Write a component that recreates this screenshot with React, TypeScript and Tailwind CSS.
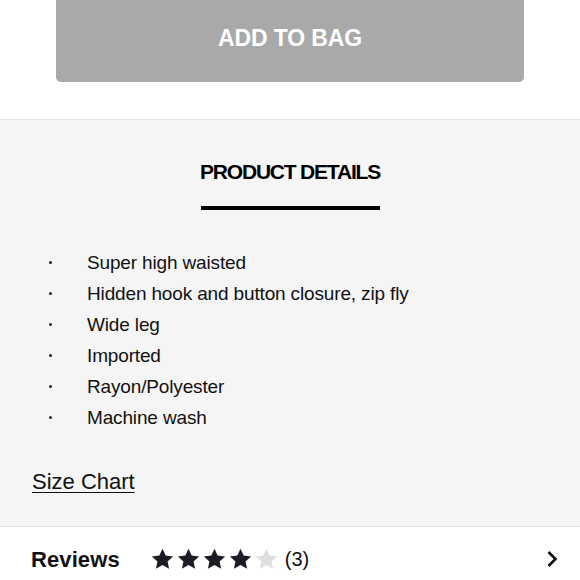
const details = [
	"Super high waisted",
	"Hidden hook and button closure, zip fly",
	"Wide leg",
	"Imported",
	"Rayon/Polyester",
	"Machine wash",
];

function Star({ filled }: { filled: boolean }) {
	return (
		<svg width="23" height="22" viewBox="0 0 24 23" className={filled ? "text-[#1c1c26]" : "text-[#dedede]"}>
			<path
				fill="currentColor"
				d="M12 0.8l3.3 7.1 7.8 0.9-5.8 5.3 1.6 7.7L12 17.9l-6.9 3.9 1.6-7.7-5.8-5.3 7.8-0.9z"
			/>
		</svg>
	);
}

export default function App() {
	return (
		<div className="w-[580px] h-[580px] overflow-hidden bg-white text-[#111] font-['Liberation_Sans',Arial,sans-serif]">
			<div className="px-[56px] pb-[37px]">
				<button
					type="button"
					className="w-full h-[82px] rounded-b-[5px] bg-[#a9a9a9] text-white text-[23px] font-bold tracking-[-0.1px] leading-none pb-[6px]"
				>
					ADD TO BAG
				</button>
			</div>

			<section className="bg-[#f5f5f5] border-y border-[#e3e3e3] pt-[39px] pb-[32px]">
				<div className="flex flex-col items-center">
					<h2 className="text-[21px] leading-[26px] font-bold tracking-[-1.2px] text-black">PRODUCT DETAILS</h2>
					<div className="w-[179px] h-[4px] bg-black mt-[21px]" />
				</div>

				<ul className="mt-[37px] pl-[49px]">
					{details.map((d) => (
						<li key={d} className="flex items-center text-[19px] leading-[31px] tracking-[-0.15px]">
							<span className="w-[38px] flex">
								<span className="w-[3px] h-[3px] rounded-full bg-[#222]" />
							</span>
							<span>{d}</span>
						</li>
					))}
				</ul>

				<a href="#" className="block mt-[37px] ml-[32px] w-max text-[22px] leading-[24px] underline underline-offset-[3px] decoration-1 text-[#111]">
					Size Chart
				</a>
			</section>

			<div className="flex items-center h-[52px] pl-[31px] pr-[22px] pt-[12px]">
				<span className="text-[22px] font-bold tracking-[0.1px]">Reviews</span>
				<div className="flex items-center gap-[3px] ml-[31px]">
					<Star filled />
					<Star filled />
					<Star filled />
					<Star filled />
					<Star filled={false} />
				</div>
				<span className="ml-[7px] text-[20px]">(3)</span>
				<svg width="12" height="18" viewBox="0 0 12 18" className="ml-auto">
					<path d="M2.5 2l7 7-7 7" fill="none" stroke="#111" strokeWidth="2.6" />
				</svg>
			</div>
		</div>
	);
}
